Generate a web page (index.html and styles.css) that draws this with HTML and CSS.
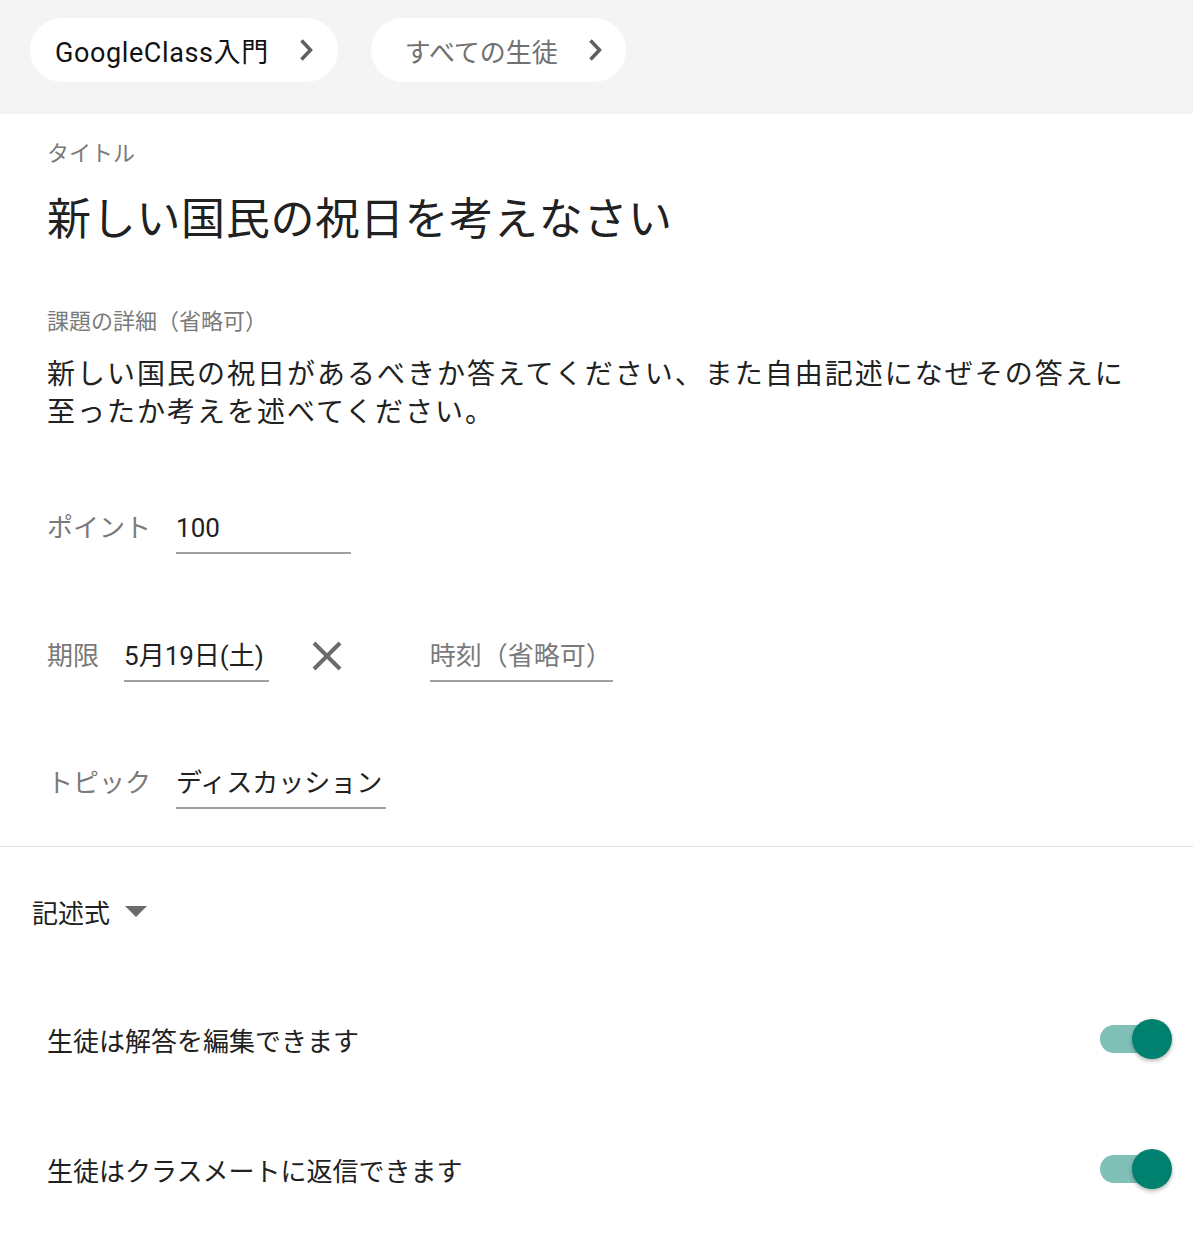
FILE: index.html
```html
<!DOCTYPE html>
<html lang="ja">
<head>
    <meta charset="UTF-8">
    <meta name="viewport" content="width=device-width, initial-scale=1.0">
    <title>課題の作成</title>
    <link rel="stylesheet" href="styles.css">
</head>
<body>

    <header class="crumbs">
        <div class="chip course">
            <span>GoogleClass入門</span>
            <svg class="chev" width="24" height="24" viewBox="0 0 24 24"><path d="M8.5 2.5 L17.5 12 L8.5 21.5" fill="none" stroke="#5f5f5f" stroke-width="3.5"/></svg>
        </div>
        <div class="chip muted">
            <span>すべての生徒</span>
            <svg class="chev" width="24" height="24" viewBox="0 0 24 24"><path d="M8.5 2.5 L17.5 12 L8.5 21.5" fill="none" stroke="#5f5f5f" stroke-width="3.5"/></svg>
        </div>
    </header>

    <section class="form">
        <div class="label">タイトル</div>
        <h1 class="title">新しい国民の祝日を考えなさい</h1>

        <div class="label details-label">課題の詳細（省略可）</div>
        <p class="details">新しい国民の祝日があるべきか答えてください、また自由記述になぜその答えに至ったか考えを述べてください。</p>

        <div class="row points">
            <span class="row-label">ポイント</span>
            <span class="field points-field">100</span>
        </div>

        <div class="row due">
            <span class="row-label">期限</span>
            <span class="field date-field">5月19日(土)</span>
            <svg class="clear" width="30" height="30" viewBox="0 0 30 30"><path d="M2 2 L28 28 M28 2 L2 28" stroke="#6b6b6b" stroke-width="4"/></svg>
            <span class="field time-field">時刻（省略可）</span>
        </div>

        <div class="row topic">
            <span class="row-label">トピック</span>
            <span class="field topic-field">ディスカッション</span>
        </div>
    </section>

    <section class="options">
        <div class="type">記述式 <span class="caret"></span></div>

        <div class="toggle-row">
            <span>生徒は解答を編集できます</span>
            <div class="switch"><div class="knob"></div></div>
        </div>
        <div class="toggle-row">
            <span>生徒はクラスメートに返信できます</span>
            <div class="switch"><div class="knob"></div></div>
        </div>
    </section>

</body>
</html>
```

FILE: styles.css
```css
body {
    margin: 0;
    font-family: Roboto, "Noto Sans CJK JP", sans-serif;
    color: #212121;
    background-color: white;
}
.crumbs {
    background-color: #f4f4f4;
    height: 114px;
    display: flex;
    align-items: flex-start;
    gap: 33px;
    padding: 18px 0 0 30px;
    box-sizing: border-box;
}
.chip {
    background-color: white;
    height: 64px;
    border-radius: 32px;
    display: flex;
    align-items: center;
    font-size: 26px;
    color: #111;
}
.chip.course {
    font-size: 27px;
    letter-spacing: 0.6px;
    padding: 0 21px 0 25px;
    gap: 24px;
}
.chip.muted {
    color: #707070;
    padding: 0 20px 0 34px;
    gap: 24px;
}
.chev {
    display: block;
}
.form {
    padding: 0 47px 37px;
    border-bottom: 1px solid #e0e0e0;
}
.label {
    color: #7a7a7a;
    font-size: 22px;
    margin-top: 24px;
    line-height: 32px;
}
.title {
    font-size: 44px;
    font-weight: 400;
    margin: 20px 0 0;
    line-height: 60px;
    letter-spacing: 0.7px;
}
.details-label {
    margin-top: 56px;
}
.details {
    font-size: 28px;
    line-height: 38px;
    margin: 18px 0 0;
    letter-spacing: 2px;
}
.row {
    display: flex;
    align-items: baseline;
    font-size: 26px;
    line-height: 36px;
}
.row-label {
    color: #7a7a7a;
}
.field {
    border-bottom: 2px solid #a0a0a0;
    padding-bottom: 6px;
}
.points {
    margin-top: 78px;
}
.points .row-label {
    margin-right: 25px;
}
.points-field {
    width: 175px;
}
.due {
    margin-top: 84px;
}
.due .row-label {
    margin-right: 25px;
}
.date-field {
    padding-right: 5px;
}
.clear {
    align-self: flex-start;
    margin: 3px 88px 0 43px;
}
.time-field {
    color: #7a7a7a;
    width: 183px;
}
.topic {
    margin-top: 83px;
}
.topic .row-label {
    margin-right: 25px;
}
.topic-field {
    width: 210px;
}
.options {
    padding: 0 21px 0 32px;
}
.type {
    font-size: 26px;
    margin-top: 46px;
    display: flex;
    align-items: center;
}
.caret {
    display: inline-block;
    width: 0;
    height: 0;
    border-left: 11px solid transparent;
    border-right: 11px solid transparent;
    border-top: 11px solid #6b6b6b;
    margin-left: 15px;
}
.toggle-row {
    display: flex;
    justify-content: space-between;
    align-items: center;
    font-size: 26px;
    padding-left: 15px;
    height: 130px;
}
.type + .toggle-row {
    margin-top: 44px;
}
.switch {
    width: 70px;
    height: 28px;
    border-radius: 14px;
    background-color: #80c0b6;
    position: relative;
    margin-right: 2px;
}
.knob {
    position: absolute;
    right: -2px;
    top: -6px;
    width: 40px;
    height: 40px;
    border-radius: 50%;
    background-color: #00806f;
    box-shadow: 0 2px 4px rgba(0, 0, 0, 0.3);
}
```
